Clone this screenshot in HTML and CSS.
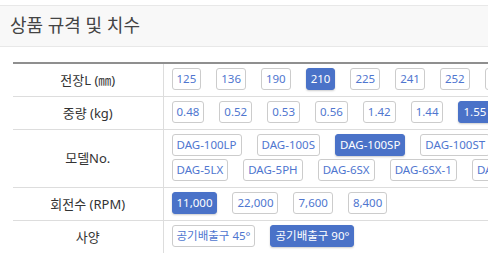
FILE: index.html
```html
<!DOCTYPE html>
<html lang="ko">
<head>
    <meta charset="UTF-8">
    <title>상품 규격 및 치수</title>
    <link rel="stylesheet" href="styles.css">
</head>
<body>
    <div class="spec-title">상품 규격 및 치수</div>

    <table class="spec-table">
        <tr>
            <th>전장L (㎜)</th>
            <td>
                <div class="opts">
                    <span class="opt">125</span>
                    <span class="opt">136</span>
                    <span class="opt">190</span>
                    <span class="opt on">210</span>
                    <span class="opt">225</span>
                    <span class="opt">241</span>
                    <span class="opt">252</span>
                    <span class="opt">265</span>
                </div>
            </td>
        </tr>
        <tr>
            <th>중량 (kg)</th>
            <td>
                <div class="opts">
                    <span class="opt">0.48</span>
                    <span class="opt">0.52</span>
                    <span class="opt">0.53</span>
                    <span class="opt">0.56</span>
                    <span class="opt">1.42</span>
                    <span class="opt">1.44</span>
                    <span class="opt on">1.55</span>
                </div>
            </td>
        </tr>
        <tr>
            <th>모델No.</th>
            <td>
                <div class="opts">
                    <span class="opt">DAG-100LP</span>
                    <span class="opt">DAG-100S</span>
                    <span class="opt on">DAG-100SP</span>
                    <span class="opt">DAG-100ST</span>
                    <span class="opt">DAG-5LX</span>
                    <span class="opt">DAG-5PH</span>
                    <span class="opt">DAG-6SX</span>
                    <span class="opt">DAG-6SX-1</span>
                    <span class="opt">DAG-6SP</span>
                </div>
            </td>
        </tr>
        <tr>
            <th>회전수 (RPM)</th>
            <td>
                <div class="opts">
                    <span class="opt on">11,000</span>
                    <span class="opt">22,000</span>
                    <span class="opt">7,600</span>
                    <span class="opt">8,400</span>
                </div>
            </td>
        </tr>
        <tr>
            <th>사양</th>
            <td>
                <div class="opts">
                    <span class="opt">공기배출구 45°</span>
                    <span class="opt on">공기배출구 90°</span>
                </div>
            </td>
        </tr>
    </table>
</body>
</html>
```

FILE: styles.css
```css
* { box-sizing: border-box; }

body {
    margin: 0;
    overflow: hidden;
    font: 13px/1.4 "Noto Sans", "Noto Sans CJK KR", sans-serif;
    color: #333;
    background: #fff;
}

/* title band */
.spec-title {
    margin-top: 5px;
    height: 42px;
    padding: 0 10px;
    display: flex;
    align-items: center;
    font-size: 18px;
    color: #444;
    background: #f8f8f8;
    border-top: 1px solid #e8e8e8;
    border-bottom: 1px solid #e8e8e8;
}

/* spec table */
.spec-table {
    margin: 15px 0 0 13px;
    width: 540px;
    border-collapse: collapse;
    border-top: 2px solid #8f8f8f;
}

.spec-table th,
.spec-table td {
    border-bottom: 1px solid #ddd;
    padding: 4px 10px 6px 8px;
}

.spec-table th {
    width: 150px;
    padding: 0;
    font-weight: normal;
    text-align: center;
    border-right: 1px solid #ddd;
}

.opts {
    display: flex;
    flex-wrap: wrap;
    gap: 3px 15px;
}

.opt {
    height: 22px;
    padding: 0 4px;
    display: flex;
    align-items: center;
    font-size: 11.5px;
    color: #4f76cf;
    background: #fff;
    border: 1px solid #ccc;
    border-radius: 3px;
}

.opt.on {
    color: #fff;
    background: #4a72c8;
    border-color: #4a72c8;
    box-shadow: 0 1px 2px #0003;
}
```
